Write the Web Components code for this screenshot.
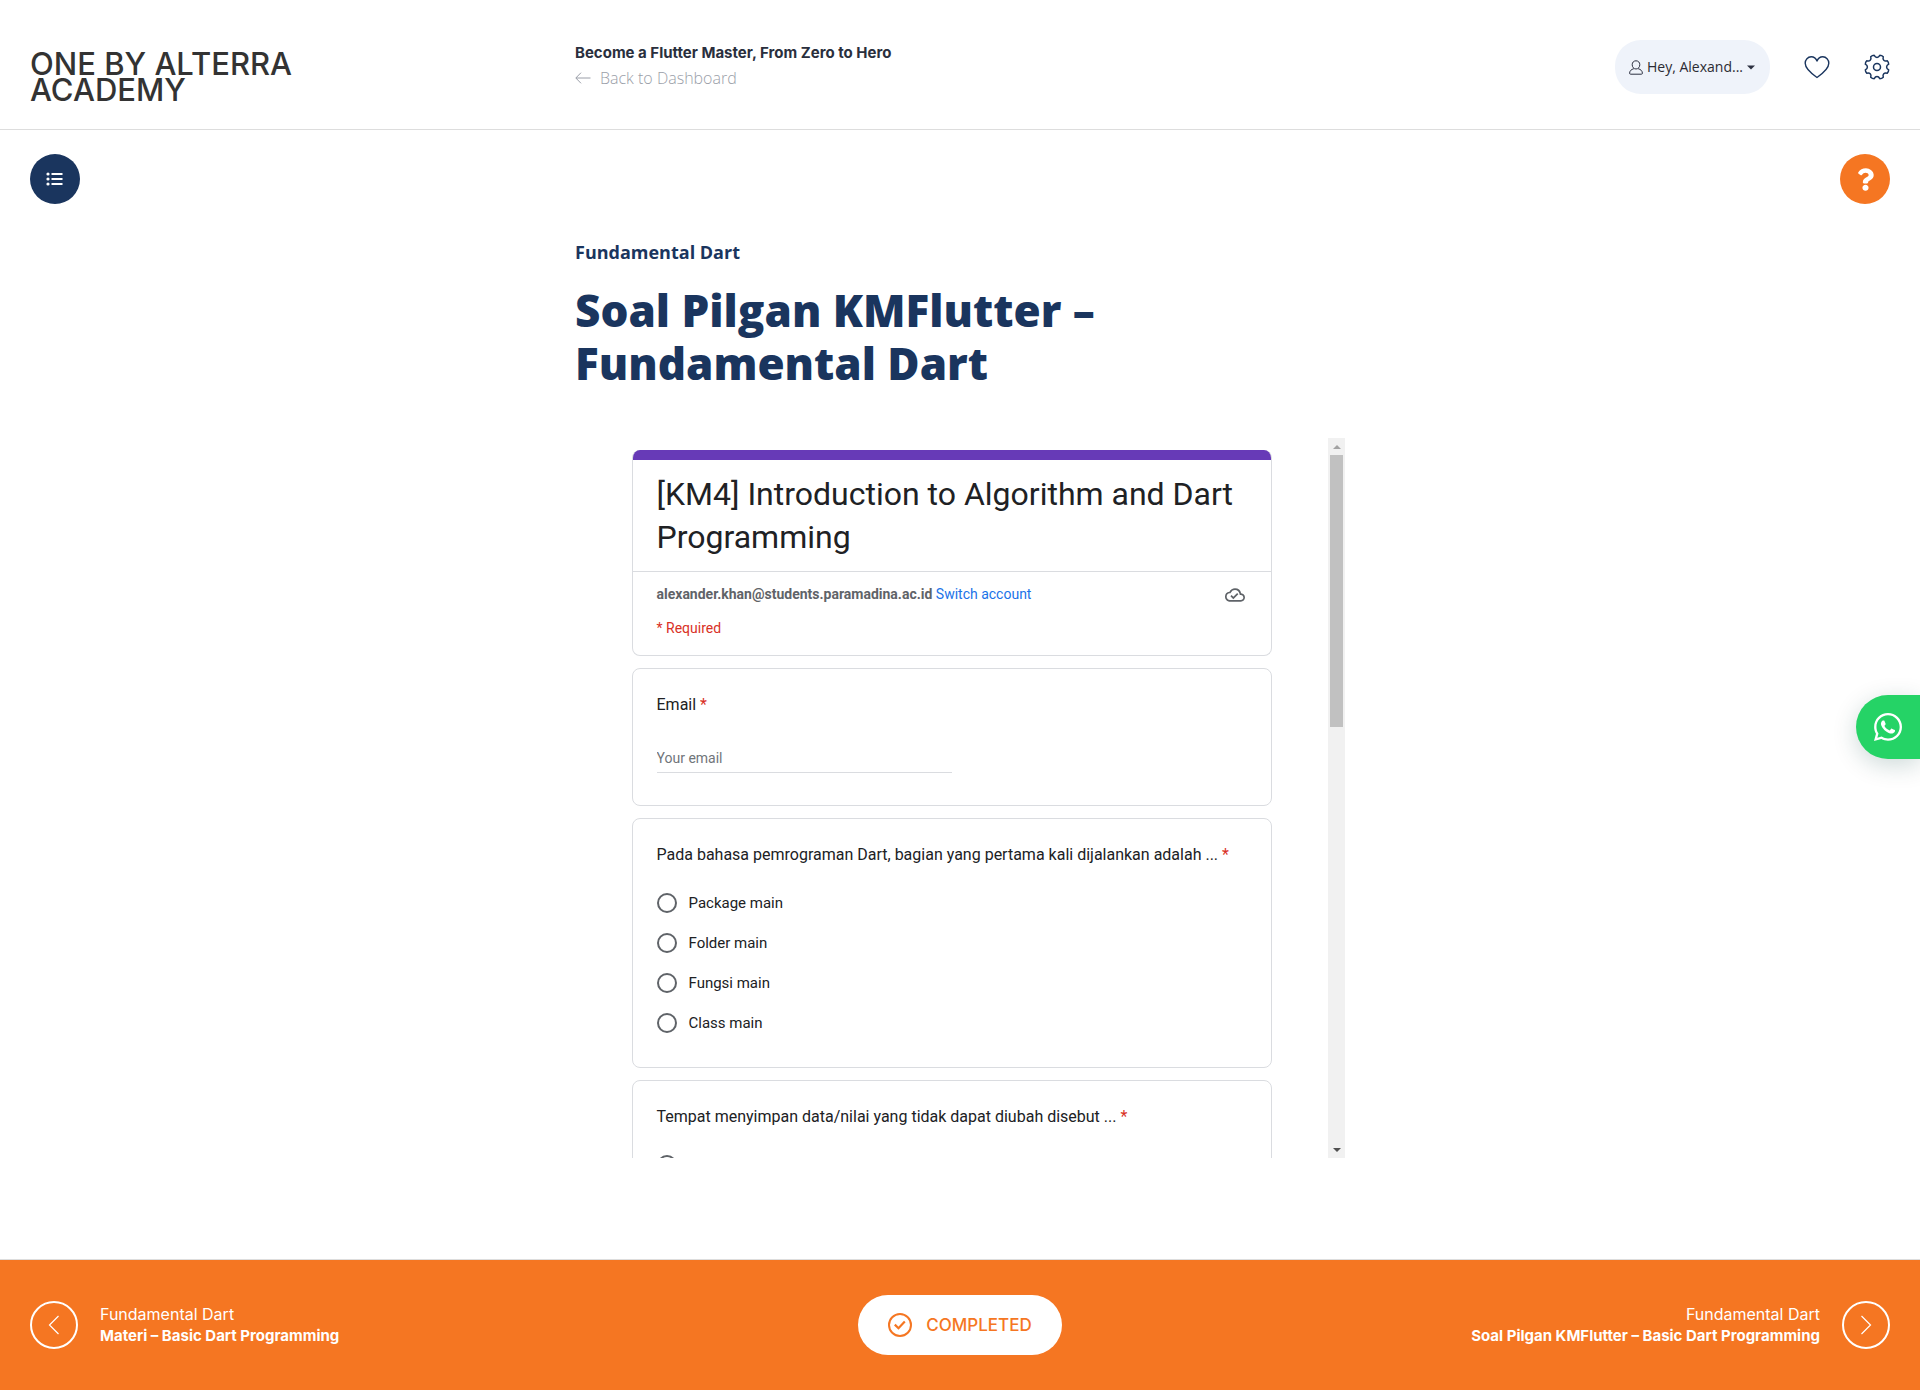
<!DOCTYPE html>
<html lang="id">
<head>
<meta charset="utf-8">
<meta name="viewport" content="width=device-width, initial-scale=1">
<title>Soal Pilgan KMFlutter – Fundamental Dart</title>
<style>
  :root {
    --navy: #1a355e;
    --orange: #f57622;
    --line: #dadce0;
    --display: Inter, "Liberation Sans", sans-serif;
    --body: "Open Sans", "Noto Sans", sans-serif;
    --form: Roboto, "Liberation Sans", sans-serif;
  }
  body { margin: 0; background: #fff; font-family: var(--body); }
</style>
</head>
<body>
<academy-app></academy-app>

<script>
const BASE = `<style>
  *, *::before, *::after { box-sizing: border-box; }
  :host { display: block; }
  a { color: inherit; text-decoration: none; }
  button { font: inherit; color: inherit; border: 0; margin: 0; padding: 0; background: none; cursor: pointer; }
  h1, h2, p { margin: 0; }
</style>`;

function define(name, render) {
  customElements.define(name, class extends HTMLElement {
    constructor() { super(); this.attachShadow({ mode: "open" }); }
    connectedCallback() { this.shadowRoot.innerHTML = BASE + render(this); }
  });
}

/* Eight teeth round a hub, with rounded valleys between them. */
function gearPath() {
  const at = (deg, r) => {
    const t = deg * Math.PI / 180;
    return (13 + r * Math.cos(t)).toFixed(2) + " " + (13 + r * Math.sin(t)).toFixed(2);
  };
  let d = "";
  for (let k = 0; k < 8; k++) {
    const a = 22.5 + 45 * k;
    d += (k ? "L" : "M") + at(a - 9, 12) + "Q" + at(a, 12.6) + " " + at(a + 9, 12);
    d += "C" + at(a + 14, 9) + " " + at(a + 31, 9) + " " + at(a + 36, 12);
  }
  return d + "Z";
}

const ICONS = {
  list: ["0 0 18 14", `<g fill="currentColor"><circle cx="2" cy="2" r="1.6"/><circle cx="2" cy="7" r="1.6"/><circle cx="2" cy="12" r="1.6"/><path d="M5.5 1h11v2h-11zM5.5 6h11v2h-11zM5.5 11h11v2h-11z"/></g>`],
  help: ["0 0 384 512", `<path fill="currentColor" d="M202.021 0C122.202 0 70.503 32.703 29.914 91.026c-7.363 10.58-5.093 25.086 5.178 32.874l43.138 32.709c10.373 7.865 25.132 6.026 33.253-4.148 25.049-31.381 43.63-49.449 82.757-49.449 30.764 0 68.816 19.799 68.816 49.631 0 22.552-18.617 34.134-48.993 51.164-35.423 19.86-82.299 44.576-82.299 106.405V320c0 13.255 10.745 24 24 24h72.471c13.255 0 24-10.745 24-24v-5.773c0-42.86 125.268-44.645 125.268-160.627C377.504 66.256 286.902 0 202.021 0zM192 373.459c-38.196 0-69.271 31.075-69.271 69.271 0 38.195 31.075 69.27 69.271 69.27s69.271-31.075 69.271-69.271-31.075-69.27-69.271-69.27z"/>`],
  user: ["0 0 14 15", `<g fill="none" stroke="currentColor" stroke-width="1"><path d="M7 .8c2.3 0 3.8 1.600 3.800 3.900S9.300 9 7 9 3.200 7 3.200 4.700 4.700.8 7 .8z"/><path d="M4.800 8.700C2.200 9.500.7 10.800.6 13.200c0 .7.300 1 1 1h10.800c.7 0 1-.3 1-1-.1-2.400-1.600-3.700-4.200-4.500"/></g>`],
  caret: ["0 0 8 5", `<path fill="currentColor" d="M0 .5h8L4 4.500z"/>`],
  heart: ["0 0 26 24", `<path fill="none" stroke="currentColor" stroke-width="1.400" stroke-linejoin="round" d="M13 22.500C8 19 1.200 14.200 1.200 8.300 1.200 4.600 3.800 1.800 7.200 1.800c2.700 0 4.800 1.600 5.800 4.300 1-2.700 3.100-4.300 5.800-4.300 3.400 0 6 2.800 6 6.500 0 5.900-6.800 10.700-11.800 14.200z"/>`],
  gear: ["0 0 26 26", `<g fill="none" stroke="currentColor" stroke-width="1.500" stroke-linejoin="round"><path d="${gearPath()}"/><circle cx="13" cy="13" r="3.500"/></g>`],
  back: ["0 0 16 12", `<path fill="none" stroke="currentColor" stroke-width="1" d="M15.500 6H1M6 .7.8 6 6 11.300"/>`],
  left: ["0 0 12 20", `<path fill="none" stroke="currentColor" stroke-width="1.200" d="M10.500 1 1.500 10l9 9"/>`],
  right: ["0 0 12 20", `<path fill="none" stroke="currentColor" stroke-width="1.200" d="m1.500 1 9 9-9 9"/>`],
  done: ["0 0 24 24", `<g fill="none" stroke="currentColor" stroke-width="2"><circle cx="12" cy="12" r="11"/><path stroke-width="2.200" d="m6.800 11.600 3.700 3.600 6.300-6.600"/></g>`],
  cloud: ["0 0 24 24", `<path fill="currentColor" d="M19.350 10.040A7.490 7.490 0 0 0 12 4C9.110 4 6.600 5.640 5.350 8.040A5.994 5.994 0 0 0 0 14c0 3.310 2.690 6 6 6h13c2.760 0 5-2.240 5-5 0-2.640-2.050-4.780-4.650-4.960zM19 18H6c-2.210 0-4-1.790-4-4 0-2.050 1.530-3.760 3.560-3.970l1.070-.11.5-.95A5.469 5.469 0 0 1 12 6c2.620 0 4.880 1.860 5.390 4.430l.3 1.500 1.530.11A2.980 2.980 0 0 1 22 15c0 1.650-1.350 3-3 3zm-9-3.820-2.090-2.090L6.500 13.500 10 17l6.010-6.010-1.410-1.410z"/>`],
  whatsapp: ["0 32 448 448", `<path fill="currentColor" d="M380.900 97.100C339 55.100 283.200 32 223.900 32c-122.400 0-222 99.600-222 222 0 39.100 10.200 77.300 29.600 111L0 480l117.700-30.900c32.400 17.700 68.900 27 106.100 27h.1c122.300 0 224.100-99.600 224.100-222 0-59.300-25.200-115-67.100-157zm-157 341.600c-33.200 0-65.700-8.900-94-25.700l-6.700-4-69.800 18.300L72 359.200l-4.400-7c-18.500-29.400-28.200-63.300-28.200-98.200 0-101.700 82.800-184.500 184.600-184.500 49.300 0 95.600 19.200 130.400 54.100 34.800 34.900 56.200 81.200 56.100 130.500 0 101.800-84.900 184.600-186.600 184.600zm101.200-138.200c-5.500-2.800-32.800-16.200-37.900-18-5.100-1.900-8.800-2.800-12.500 2.800-3.700 5.600-14.300 18-17.600 21.800-3.200 3.700-6.500 4.200-12 1.400-32.600-16.300-54-29.100-75.500-66-5.700-9.800 5.700-9.100 16.300-30.300 1.800-3.700.9-6.900-.5-9.700-1.400-2.800-12.500-30.100-17.100-41.200-4.500-10.800-9.100-9.300-12.500-9.500-3.200-.2-6.900-.2-10.600-.2-3.700 0-9.700 1.400-14.800 6.900-5.100 5.600-19.400 19-19.400 46.300 0 27.300 19.900 53.700 22.600 57.400 2.800 3.700 39.100 59.700 94.800 83.800 35.200 15.200 49 16.500 66.600 13.900 10.700-1.600 32.800-13.400 37.400-26.400 4.600-13 4.600-24.100 3.200-26.400-1.300-2.500-5-3.900-10.500-6.600z"/>`],
  up: ["0 0 8 4", `<path fill="currentColor" d="M0 4h8L4 0z"/>`],
  down: ["0 0 8 4", `<path fill="currentColor" d="M0 0h8L4 4z"/>`]
};

define("app-icon", el => {
  const [box, art] = ICONS[el.getAttribute("name")];
  return `<style>
    :host { display: inline-block; flex: none; width: ${el.getAttribute("width")}px; height: ${el.getAttribute("height")}px; }
    svg { display: block; width: 100%; height: 100%; overflow: visible; }
  </style><svg viewBox="${box}" aria-hidden="true">${art}</svg>`;
});

define("round-button", el => `<style>
  button { display: grid; place-items: center; width: 50px; height: 50px; border-radius: 50%;
    color: #fff; background: var(--fill, var(--navy)); }
</style><button type="button" aria-label="${el.getAttribute("label")}"><slot></slot></button>`);

define("user-menu", () => `<style>
  button { display: flex; align-items: center; height: 54px; padding: 0 15px 0 14px; gap: 4px;
    border-radius: 26px; background: #eff3fa; color: #2c3040; font: 14px/20px var(--body); white-space: nowrap; }
  .name { color: #2b2b33; }
</style><button type="button" aria-haspopup="true">
  <app-icon name="user" width="14" height="15"></app-icon>
  <span class="name">Hey, Alexand...</span>
  <app-icon name="caret" width="8" height="5"></app-icon>
</button>`);

define("academy-header", () => `<style>
  header { display: grid; grid-template-columns: minmax(0, 1fr) minmax(0, 770px) minmax(0, 1fr);
    align-items: start; padding: 40px 30px 26px; border-bottom: 1px solid #ddd; }
  .brand { padding-top: 11px; max-width: 300px; font: 500 31px/26px var(--display); color: #333; }
  .title { font: 700 15px/26px var(--display); color: #2a2f3d; }
  .back { display: inline-flex; align-items: center; gap: 9px; font: 300 16px/24px var(--body); color: #9a9ea8; }
  nav { display: flex; justify-content: flex-end; align-items: center; }
  .tool { display: flex; color: var(--navy); margin-left: 34px; }
</style>
<header>
  <a class="brand" href="#">ONE BY ALTERRA ACADEMY</a>
  <div>
    <p class="title">Become a Flutter Master, From Zero to Hero</p>
    <a class="back" href="#"><app-icon name="back" width="16" height="12"></app-icon>Back to Dashboard</a>
  </div>
  <nav aria-label="Account">
    <user-menu></user-menu>
    <a class="tool" href="#" aria-label="Wishlist"><app-icon name="heart" width="26" height="24"></app-icon></a>
    <a class="tool" href="#" aria-label="Settings"><app-icon name="gear" width="26" height="26"></app-icon></a>
  </nav>
</header>`);

define("form-card", () => `<style>
  :host { flex: none; border: 1px solid var(--line); border-radius: 8px; background: #fff; padding: 24px; }
</style><slot></slot>`);

define("form-intro", () => `<style>
  :host { flex: none; border: 1px solid var(--line); border-top: 0; border-radius: 8px; overflow: hidden; }
  :host::before { content: ""; display: block; height: 10px; margin: 0 -1px; background: #673ab7; }
  h2 { padding: 13px 24px 12px; font: 400 32px/43px var(--form); color: #202124; border-bottom: 1px solid var(--line); }
  .account { display: flex; justify-content: space-between; align-items: center; padding: 11px 24px 0;
    font: 14px/22px var(--form); color: #5f6368; }
  .account a { color: #1a73e8; }
  .account > span:first-child { align-self: flex-start; }
  .cloud { display: grid; place-items: center; width: 24px; height: 24px; }
  .required { padding: 11px 24px 17px; font: 14px/20px var(--form); color: #d93025; }
</style>
<h2>[KM4] Introduction to Algorithm and Dart Programming</h2>
<div class="account">
  <span><b>alexander.khan@students.paramadina.ac.id</b> <a href="#">Switch account</a></span>
  <span class="cloud"><app-icon name="cloud" width="20" height="20"></app-icon></span>
</div>
<p class="required">* Required</p>`);

define("email-question", () => `<style>
  form-card { display: block; }
  label { display: block; font: 16px/24px var(--form); color: #202124; }
  label span { color: #d93025; }
  input { display: block; width: 50%; margin: 29px 0 8px; padding: 0 0 2px; border: 0; border-bottom: 1px solid var(--line);
    border-radius: 0; outline: 0; background: none; font: 14px/24px var(--form); color: #202124; height: 27px; }
  input::placeholder { color: #70757a; opacity: 1; }
</style>
<form-card>
  <label for="email">Email <span>*</span></label>
  <input id="email" type="email" placeholder="Your email" required>
</form-card>`);

define("choice-question", el => {
  const options = (el.getAttribute("options") || "").split("|");
  const rows = options.map((text, i) => `<div class="option">
    <input type="radio" name="answer" id="o${i}"${text ? "" : ` aria-label="Pilihan ${i + 1}"`}>
    <label for="o${i}">${text}</label></div>`).join("");
  return `<style>
    form-card { display: block; }
    fieldset { margin: 0; padding: 0; border: 0; min-width: 0; }
    legend { padding: 0 0 16px; font: 16px/24px var(--form); color: #202124; }
    legend span { color: #d93025; }
    .option { display: flex; align-items: center; gap: 12px; height: 40px; }
    input { appearance: none; flex: none; width: 20px; height: 20px; margin: 0; border: 2px solid #5f6368; border-radius: 50%; }
    input:checked { background: radial-gradient(#673ab7 5px, #fff 6px); border-color: #673ab7; }
    label { font: 15px/20px var(--form); color: #202124; }
  </style>
  <form-card><fieldset><legend>${el.getAttribute("question")} <span>*</span></legend>${rows}</fieldset></form-card>`;
});

define("form-viewport", () => `<style>
  :host { display: flex; height: 720px; }
  .content { flex: 1; min-width: 0; overflow: hidden; padding-top: 12px; }
  .stack { display: flex; flex-direction: column; gap: 12px; max-width: 640px; margin: 0 auto; }
  .bar { flex: none; display: flex; flex-direction: column; align-items: center; width: 17px; background: #f1f1f1; }
  .arrow { flex: none; display: grid; place-items: center; width: 17px; height: 17px; color: #a3a3a3; }
  .arrow.end { color: #505050; }
  .track { flex: 1; width: 13px; }
  .thumb { height: 272px; background: #c1c1c1; }
</style>
<div class="content"><div class="stack"><slot></slot></div></div>
<div class="bar" aria-hidden="true">
  <span class="arrow"><app-icon name="up" width="8" height="4"></app-icon></span>
  <div class="track"><div class="thumb"></div></div>
  <span class="arrow end"><app-icon name="down" width="8" height="4"></app-icon></span>
</div>`);

define("lesson-page", () => `<style>
  .tools { display: flex; justify-content: space-between; padding: 24px 30px 36px; }
  .help { --fill: var(--orange); }
  article { max-width: 770px; margin: 0 auto 101px; }
  .module { font: 700 18px/24px var(--body); color: var(--navy); }
  h1 { margin: 20px 0 48px; font: 800 44px/53px var(--body); color: var(--navy); }
</style>
<main>
  <div class="tools">
    <round-button label="Daftar materi"><app-icon name="list" width="18" height="14"></app-icon></round-button>
    <round-button class="help" label="Bantuan"><app-icon name="help" width="17" height="23"></app-icon></round-button>
  </div>
  <article>
    <p class="module">Fundamental Dart</p>
    <h1>Soal Pilgan KMFlutter – Fundamental Dart</h1>
    <form-viewport>
      <form-intro></form-intro>
      <email-question></email-question>
      <choice-question question="Pada bahasa pemrograman Dart, bagian yang pertama kali dijalankan adalah ..."
        options="Package main|Folder main|Fungsi main|Class main"></choice-question>
      <choice-question question="Tempat menyimpan data/nilai yang tidak dapat diubah disebut ..." options=""></choice-question>
    </form-viewport>
  </article>
</main>`);

define("lesson-link", el => {
  const next = el.getAttribute("side") === "right";
  return `<style>
    a { display: flex; flex-direction: ${next ? "row-reverse" : "row"}; align-items: center; gap: 22px;
      text-align: ${next ? "right" : "left"}; color: #fff; }
    .ring { flex: none; display: grid; place-items: center; width: 48px; height: 48px; border: 2px solid #fff; border-radius: 50%; }
    .text { font: 400 16px/22px var(--display); }
    b { display: block; font-size: 15px; font-weight: 700; }
  </style>
  <a href="#">
    <span class="ring"><app-icon name="${next ? "right" : "left"}" width="12" height="20"></app-icon></span>
    <span class="text"><slot name="module"></slot><b><slot></slot></b></span>
  </a>`;
});

define("lesson-footer", () => `<style>
  footer { display: grid; grid-template-columns: 1fr auto 1fr; align-items: center; min-height: 131px; padding: 0 30px;
    border-top: 1px solid #ddd; background: var(--orange); }
  .done { display: flex; align-items: center; gap: 14px; height: 60px; padding: 0 30px; border-radius: 30px;
    background: #fff; color: var(--orange); font: 500 17px/24px var(--display); }
</style>
<footer>
  <lesson-link side="left"><span slot="module">Fundamental Dart</span>Materi – Basic Dart Programming</lesson-link>
  <button class="done" type="button"><app-icon name="done" width="24" height="24"></app-icon>COMPLETED</button>
  <lesson-link side="right"><span slot="module">Fundamental Dart</span>Soal Pilgan KMFlutter – Basic Dart Programming</lesson-link>
</footer>`);

define("whatsapp-button", () => `<style>
  :host { position: fixed; right: 0; top: 50%; }
  a { display: flex; align-items: center; width: 64px; height: 64px; padding-left: 18px; border-radius: 32px 0 0 32px;
    background: #25d366; color: #fff; box-shadow: 0 6px 24px rgba(7, 66, 60, .2); }
</style><a href="#" aria-label="WhatsApp"><app-icon name="whatsapp" width="28" height="28"></app-icon></a>`);

define("academy-app", () => `<style>
  :host { display: flex; flex-direction: column; min-height: 100vh; }
  lesson-page { flex: 1; }
</style>
<academy-header></academy-header>
<lesson-page></lesson-page>
<lesson-footer></lesson-footer>
<whatsapp-button></whatsapp-button>`);
</script>
</body>
</html>
